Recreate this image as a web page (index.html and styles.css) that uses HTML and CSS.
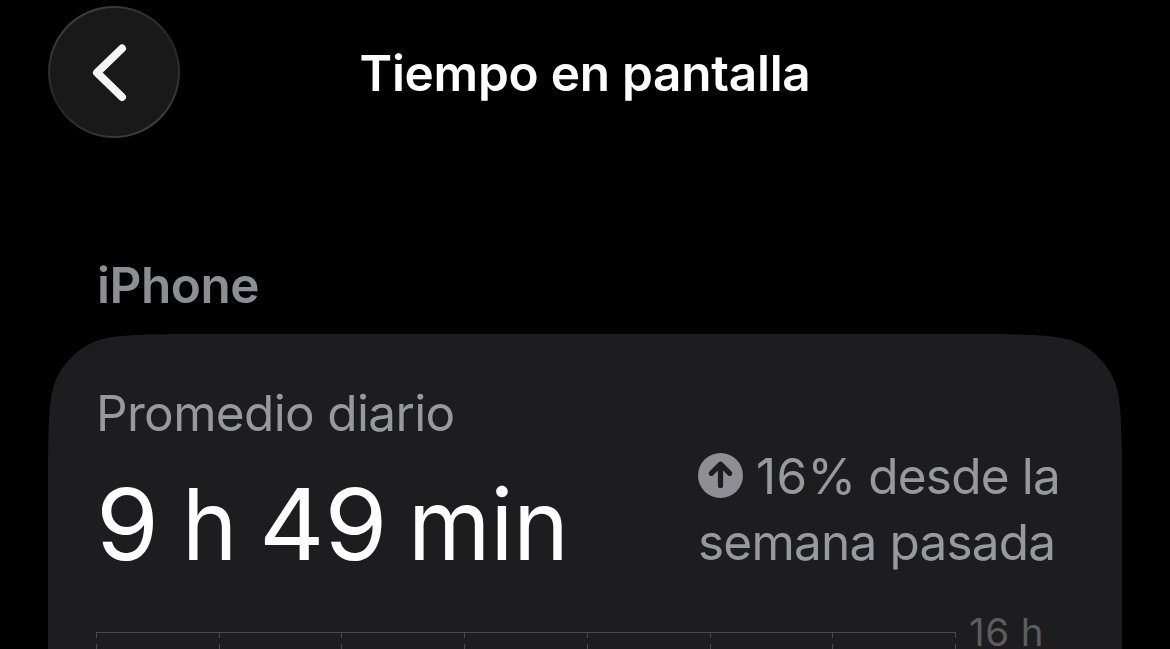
FILE: index.html
```html
<!DOCTYPE html>
<html lang="es">
<head>
<meta charset="utf-8">
<title>Tiempo en pantalla</title>
<link rel="stylesheet" href="styles.css">
</head>
<body>
<header class="navbar">
  <button class="back" aria-label="Atrás">
    <svg class="chevron" viewBox="0 0 132 132"><path d="M74 42.5 L49 66.7 L74 91"/></svg>
  </button>
  <h1 class="title">Tiempo en pantalla</h1>
</header>
<main class="content">
  <h2 class="section">iPhone</h2>
  <section class="card">
    <div class="summary">
      <div class="average">
        <div class="label">Promedio diario</div>
        <div class="value"><span class="hours">9</span> <span class="unit-h">h</span> <span class="minutes">49</span> <span class="unit-min">min</span></div>
      </div>
      <div class="trend">
        <div class="trend-row">
          <svg class="arrow" viewBox="0 0 45 45"><circle cx="22.5" cy="22.5" r="22.5"/><path d="M22.5 32.5 V12 M13.3 20.3 L22.5 11.2 L31.7 20.3"/></svg>
          <span><span class="percent">16%</span> <span class="since">desde la</span></span>
        </div>
        <div class="trend-row last-week">semana pasada</div>
      </div>
    </div>
    <div class="chart">
      <svg class="grid" viewBox="0 0 860 17">
        <path d="M0 .5 H860"/>
        <path class="dashed" d="M.5 0V17 M123.5 0V17 M245.5 0V17 M368.5 0V17 M491.5 0V17 M614.5 0V17 M736.5 0V17 M859.5 0V17"/>
      </svg>
      <span class="axis">16 h</span>
    </div>
  </section>
</main>
</body>
</html>
```
FILE: styles.css
```css
* { box-sizing: border-box; }
body {
  margin: 0;
  height: 649px;
  overflow: hidden;
  background: #000;
  color: #fff;
  font-family: Inter, "Liberation Sans", sans-serif;
  font-size: 49.5px;
  line-height: 66px;
  white-space: nowrap;
}
h1, h2 { margin: 0; font-size: inherit; font-weight: 600; }
.navbar {
  display: grid;
  grid-template-columns: 132px 1fr 132px;
  padding: 6px 48px 0;
  height: 252px;
  align-items: start;
}
.back {
  width: 132px;
  height: 132px;
  padding: 0;
  border: 2.5px solid transparent;
  border-radius: 50%;
  background: linear-gradient(#191919, #191919) padding-box, linear-gradient(150deg, #484848, #303030 30%, #252525 50%, #303030 70%, #484848) border-box;
}
.chevron { display: block; width: 132px; height: 132px; margin: -2px; }
.chevron path { fill: none; stroke: #f5f5f5; stroke-width: 8; stroke-linecap: round; stroke-linejoin: round; }
.title { padding-top: 34px; text-align: center; letter-spacing: -.25px; }
.content { padding: 0 48px; }
.section { height: 82px; padding-left: 49px; color: #8d8d94; letter-spacing: -.45px; }
.card {
  height: 315px;
  padding: 46px 48px 0;
  background: #1d1d1f;
  clip-path: path("M0 315V124C.8 89 .8 68 6.3 50.3C13.6 30 30 13.6 50.3 6.3C68 .8 89 .8 124 0H950C985 .8 1006 .8 1023.7 6.3C1044 13.6 1060.4 30 1067.7 50.3C1073.2 68 1073.2 89 1074 124V315Z");
}
.summary { display: flex; height: 228px; }
.average { width: 602px; }
.label { color: #98989f; letter-spacing: -.66px; }
.value {
  display: grid;
  grid-template-columns: 86px 77px 149px auto;
  margin-top: 18px;
  font-size: 98.6px;
  line-height: 120px;
}
.value span { transform-origin: left; }
.hours, .minutes { transform: scaleX(1.03); }
.unit-h { transform: scaleX(.95); }
.unit-min { transform: scaleX(.955); }
.trend { padding-top: 63px; color: #98989f; }
.trend-row { display: flex; align-items: center; gap: 13px; height: 66px; }
.percent { letter-spacing: .3px; }
.since { margin-left: -2px; letter-spacing: -.8px; }
.last-week { letter-spacing: -.8px; }
.arrow { width: 45px; height: 45px; margin-bottom: 1px; }
.arrow circle { fill: #8e8e94; }
.arrow path { fill: none; stroke: #1d1d1f; stroke-width: 5.2; stroke-linecap: round; stroke-linejoin: round; }
.chart { display: flex; align-items: flex-start; gap: 13px; }
.grid { width: 860px; height: 17px; margin-top: 24px; }
.grid path { fill: none; stroke: #4a4a4c; stroke-width: 1; }
.grid .dashed { stroke-dasharray: 6 6; }
.axis { font-size: 38.5px; line-height: 48px; color: #5c5c60; letter-spacing: .5px; }
```
